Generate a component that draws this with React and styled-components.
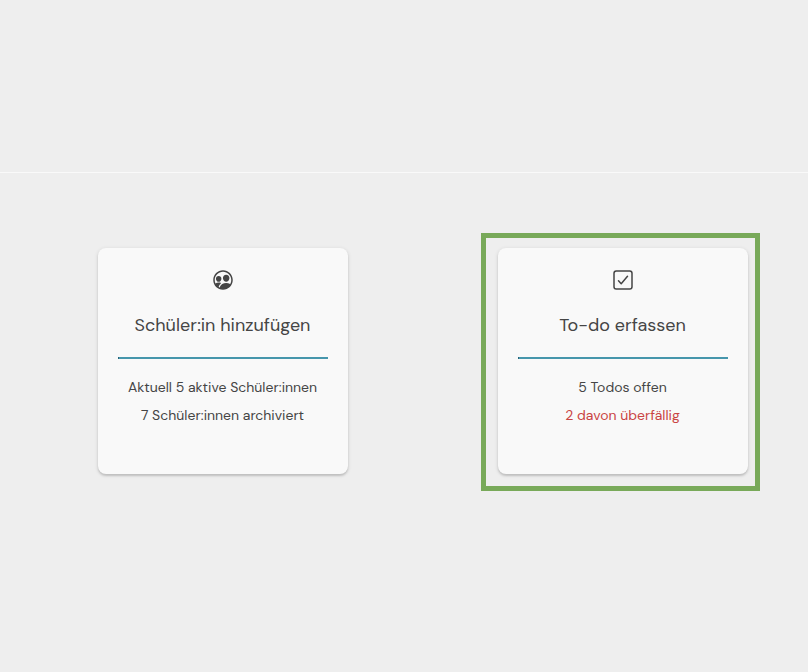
import React from "react";
import styled, { createGlobalStyle } from "styled-components";
import { IoPeopleCircleOutline, IoCheckboxOutline } from "react-icons/io5";

const GlobalStyle = createGlobalStyle`
  * { box-sizing: border-box; }
  body {
    margin: 0;
    background: #eeeeee;
    font-family: "DM Sans", Lato, "Open Sans", sans-serif;
    color: #454545;
    overflow: hidden;
  }
`;

const Page = styled.div`
  width: 808px;
  height: 672px;
`;

const TopSection = styled.header`
  height: 173px;
  border-bottom: 1px solid #f9f9f9;
`;

const Cards = styled.main`
  display: flex;
  gap: 116px;
  padding: 60px 0 0 81px;
`;

const Slot = styled.div`
  width: ${(p) => (p.$highlighted ? 279 : 284)}px;
  height: 258px;
  padding: 10px 11.5px;
  border: 5px solid ${(p) => (p.$highlighted ? "#78a959" : "transparent")};
`;

const Card = styled.section`
  display: flex;
  flex-direction: column;
  align-items: center;
  width: 250px;
  height: 226px;
  padding: 20px 20px 0;
  border-radius: 8px;
  background: #f9f9f9;
  box-shadow: 0 1px 4px rgba(0, 0, 0, 0.12), 0 2px 2px rgba(0, 0, 0, 0.13);
`;

const IconBox = styled.div`
  display: flex;
  align-items: center;
  justify-content: center;
  width: 24px;
  height: 24px;

  svg {
    flex: none;
  }
`;

const Title = styled.h2`
  margin: 19px 0 0;
  font-size: 18px;
  font-weight: 400;
  line-height: 28px;
  white-space: nowrap;
`;

const Divider = styled.hr`
  width: 210px;
  height: 2px;
  margin: 18px 0 14px;
  border: 0;
  border-left: 1px solid #28647a;
  background: #4696ac;
`;

const Line = styled.p`
  margin: 0;
  font-size: 14px;
  line-height: 28px;
  white-space: nowrap;
  color: ${(p) => (p.$alert ? "#c94444" : "#454545")};
`;

const cards = [
  {
    icon: <IoPeopleCircleOutline size={24} />,
    title: "Schüler:in hinzufügen",
    lines: [
      { text: "Aktuell 5 aktive Schüler:innen" },
      { text: "7 Schüler:innen archiviert" },
    ],
  },
  {
    icon: <IoCheckboxOutline size={24} />,
    title: "To-do erfassen",
    highlighted: true,
    lines: [
      { text: "5 Todos offen" },
      { text: "2 davon überfällig", alert: true },
    ],
  },
];

export default function App() {
  return (
    <Page>
      <GlobalStyle />
      <TopSection />
      <Cards>
        {cards.map((card) => (
          <Slot key={card.title} $highlighted={card.highlighted}>
            <Card>
              <IconBox>{card.icon}</IconBox>
              <Title>{card.title}</Title>
              <Divider />
              {card.lines.map((line) => (
                <Line key={line.text} $alert={line.alert}>
                  {line.text}
                </Line>
              ))}
            </Card>
          </Slot>
        ))}
      </Cards>
    </Page>
  );
}
